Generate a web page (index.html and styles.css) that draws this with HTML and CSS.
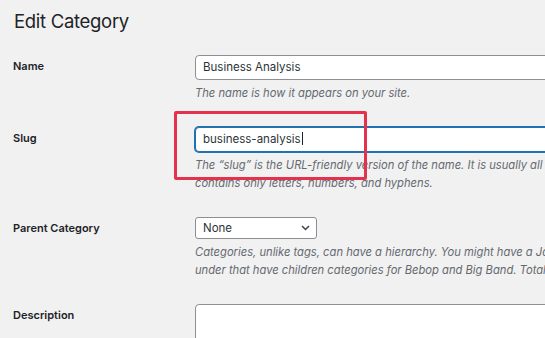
FILE: index.html
```html
<!DOCTYPE html>
<html lang="en">
<head>
  <meta charset="UTF-8">
  <meta name="viewport" content="width=device-width, initial-scale=1.0">
  <title>Edit Category</title>
  <link rel="stylesheet" href="styles.css">
</head>
<body>
  <div class="wrap">
    <h1>Edit Category</h1>
    <div class="form-table">
      <div class="row">
        <div class="label">Name</div>
        <div class="cell">
          <div class="field">Business Analysis</div>
          <p class="description">The name is how it appears on your site.</p>
        </div>
      </div>
      <div class="row">
        <div class="label">Slug</div>
        <div class="cell">
          <div class="field focus">business-analysis<span class="caret"></span></div>
          <p class="description">The “slug” is the URL-friendly version of the name. It is usually all lowercase and<br>contains only letters, numbers, and hyphens.</p>
          <div class="highlight"></div>
        </div>
      </div>
      <div class="row">
        <div class="label">Parent Category</div>
        <div class="cell">
          <div class="select-box">
            <span>None</span>
            <svg width="9" height="6" viewBox="0 0 9 6"><path d="M1 1l3.5 3.5L8 1" fill="none" stroke="#3c434a" stroke-width="1.5"/></svg>
          </div>
          <p class="description">Categories, unlike tags, can have a hierarchy. You might have a Jazz category, and<br>under that have children categories for Bebop and Big Band. Totally optional.</p>
        </div>
      </div>
      <div class="row">
        <div class="label">Description</div>
        <div class="cell">
          <div class="textarea"></div>
        </div>
      </div>
    </div>
  </div>
</body>
</html>
```

FILE: styles.css
```css
html, body { margin: 0; overflow: hidden; }
body { background: #f1f1f1; font-family: 'Inter', 'Liberation Sans', Arial, sans-serif; color: #1d2327; }
.wrap { padding: 9px 0 0 13px; }
h1 { margin: 0; font-size: 18.5px; line-height: 24px; font-weight: 400; letter-spacing: -0.3px; padding-left: 1px; }
.form-table { margin-top: 22px; display: flex; flex-direction: column; gap: 24px; }
.row { display: grid; grid-template-columns: 182px 1fr; }
.label { font-size: 11px; line-height: 16px; font-weight: 600; padding-top: 3px; }
.cell { position: relative; }
.field { width: 420px; height: 25px; box-sizing: border-box; background: #fff; border: 1px solid #8c8f94; border-radius: 4px; padding: 0 7px; font-size: 11.5px; line-height: 23px; color: #2c3338; }
.field.focus { border-color: #2271b1; box-shadow: 0 0 0 1px #2271b1; }
.caret { display: inline-block; width: 1px; height: 13px; background: #1d2327; vertical-align: -2px; margin-left: 1px; }
.description { margin: 4px 0 0; font-size: 11.2px; line-height: 18.5px; font-style: italic; color: #646970; white-space: nowrap; }
.select-box { width: 122px; height: 22px; box-sizing: border-box; background: #fff; border: 1px solid #8c8f94; border-radius: 3px; padding: 0 6px 0 7px; display: flex; align-items: center; justify-content: space-between; font-size: 11.5px; color: #2c3338; }
.textarea { width: 420px; height: 60px; background: #fff; border: 1px solid #8c8f94; border-radius: 4px; }
.highlight { position: absolute; left: -21px; top: -16px; width: 193px; height: 69px; box-sizing: border-box; border: 3.5px solid #e5314c; border-radius: 2px; }
```
